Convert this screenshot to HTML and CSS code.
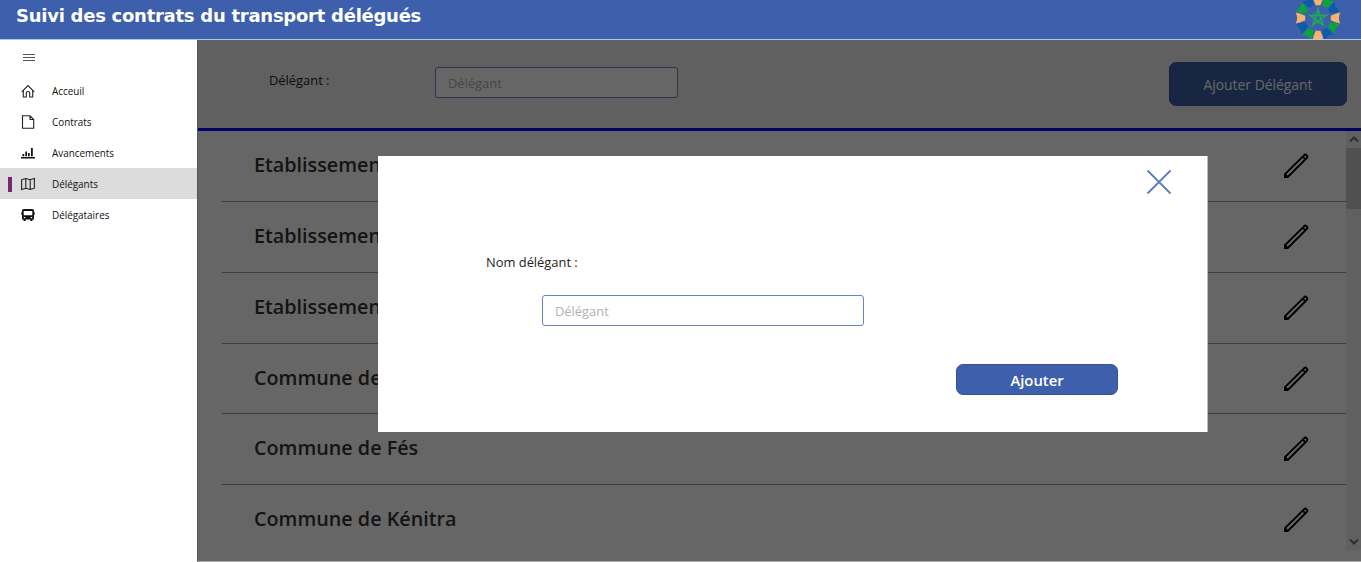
FILE: index.html
```html
<!DOCTYPE html>
<html lang="fr">
<head>
<meta charset="utf-8">
<title>Suivi des contrats du transport délégués</title>
<link rel="stylesheet" href="styles.css">
</head>
<body>
<svg class="defs" aria-hidden="true">
  <symbol id="pencil" viewBox="0 0 26 26"><path d="M2 24V21.200L21 2.300a1.900 1.900 0 0 1 2.700 2.700L4.800 24zM2.200 21.400l2.400 2.400M19.700 3.600l2.700 2.700"/></symbol>
</svg>
<header class="header">
  <h1 class="title">Suivi des contrats du transport délégués</h1>
  <svg class="logo" viewBox="-23 -18 46 39">
    <g fill="#f5b36c"><path id="p" d="M-5.500 -22.300Q0 -19.500 5.500 -22.300L4.300 -17.500L2.300 -12.800H-2.300L-4.300 -17.500Z"/><use href="#p" transform="rotate(90)"/><use href="#p" transform="rotate(180)"/><use href="#p" transform="rotate(270)"/></g>
    <g fill="#0aa53a"><path d="M-5.500 -22.300Q0 -19.500 5.500 -22.300L4.300 -17.500L2.300 -12.800H-2.300L-4.300 -17.500Z" id="g" transform="rotate(30)"/><use href="#g" transform="rotate(180)"/><use href="#g" transform="rotate(90)"/><use href="#g" transform="rotate(270)"/></g>
    <g fill="#0c5cab"><path d="M-5.500 -22.300Q0 -19.500 5.500 -22.300L4.300 -17.500L2.300 -12.800H-2.300L-4.300 -17.500Z" id="b" transform="rotate(60)"/><use href="#b" transform="rotate(180)"/><use href="#b" transform="rotate(90)"/><use href="#b" transform="rotate(270)"/></g>
    <path class="star" d="M0 -8.500L5 7L-8 -2.600H8L-5 7Z"/>
  </svg>
</header>
<div class="body">
  <nav class="sidebar">
    <div class="burger"><i></i><i></i><i></i></div>
    <a class="item"><svg class="icon" viewBox="0 0 14 14"><path d="M.8 7.800L7 1.500l6.200 6.300M2.300 6.500v6.500h3V9q0-1.500 1.700-1.500T8.700 9v4h3V6.500"/></svg>Acceuil</a>
    <a class="item"><svg class="icon" viewBox="0 0 14 14"><path d="M1.500 .8h7.500l3.700 3.700v8.700H1.500zM9 .8v3.700h3.700"/></svg>Contrats</a>
    <a class="item"><svg class="icon solid" viewBox="0 0 14 14"><path d="M0 11h14v1.500H0zM1.500 8h1.700v2.200H1.500zM4.300 5.500H6v4.700H4.300zM7 7h1.700v3.200H7zM10 2h1.800v8.200H10z"/></svg>Avancements</a>
    <a class="item active"><svg class="icon" viewBox="0 0 14 14"><path d="M.6 2.800L4.800 1.500l4.400 1.300 4.200-1.300v9.700l-4.200 1.300-4.400-1.300-4.200 1.300zM4.800 1.500v9.700M9.200 2.800v9.700"/></svg>Délégants</a>
    <a class="item"><svg class="icon solid" viewBox="0 0 14 14"><path fill-rule="evenodd" d="M2.800 1h8.400q1.800 0 1.800 1.800V4h.6v3H13v4.500h-1.500V13H9.300v-1.500H4.700V13H2.500v-1.500H1V7H.4V4H1V2.800Q1 1 2.800 1zM2.700 3v4.200h8.600V3zM2.800 9v1.200h1.500V9zM9.700 9v1.200h1.500V9z"/></svg>Délégataires</a>
  </nav>
  <main class="main">
    <section class="toolbar">
      <label class="filter-label">Délégant :</label>
      <input class="field filter-field" placeholder="Délégant">
      <button class="add">Ajouter Délégant</button>
    </section>
    <section class="content">
      <div class="list">
        <div class="row">Etablissement<svg class="pencil"><use href="#pencil"/></svg></div>
        <div class="row">Etablissement<svg class="pencil"><use href="#pencil"/></svg></div>
        <div class="row">Etablissement<svg class="pencil"><use href="#pencil"/></svg></div>
        <div class="row">Commune de<svg class="pencil"><use href="#pencil"/></svg></div>
        <div class="row">Commune de Fés<svg class="pencil"><use href="#pencil"/></svg></div>
        <div class="row">Commune de Kénitra<svg class="pencil"><use href="#pencil"/></svg></div>
      </div>
      <div class="scrollbar">
        <svg class="arrow" viewBox="0 0 15 17"><path d="M4 10.500l4-4 4 4"/></svg>
        <div class="thumb"></div>
        <svg class="arrow" viewBox="0 0 15 17"><path d="M4 6.500l4 4 4-4"/></svg>
      </div>
    </section>
    <div class="overlay"></div>
    <section class="dialog">
      <svg class="close" viewBox="0 0 26 26"><path d="M1.500 1.500l23 23M24.500 1.500l-23 23"/></svg>
      <label class="dialog-label">Nom délégant :</label>
      <input class="field dialog-field" placeholder="Délégant">
      <button class="submit">Ajouter</button>
    </section>
  </main>
</div>
</body>
</html>
```
FILE: styles.css
```css
* { box-sizing: border-box; }
body { margin: 0; height: 562px; overflow: hidden; background: #fff; font-family: "Open Sans", sans-serif; color: #333; }
.defs { display: none; }
.header { height: 40px; display: flex; justify-content: space-between; background: #3e5fab; border-bottom: 1px solid #b9c6e4; padding: 0 20px 0 16px; overflow: hidden; }
.title { margin: 5px 0 0; font: bold 18px/22px "DejaVu Sans", sans-serif; letter-spacing: -.26px; color: #fff; white-space: nowrap; }
.logo { width: 46px; height: 39px; }
.star { fill: none; stroke: #1ea65a; stroke-width: 1.8; }
.body { display: flex; height: 522px; }
.sidebar { width: 197px; padding-top: 14px; background: #fff; }
.burger { height: 21px; margin-bottom: 0; padding-left: 23px; display: flex; flex-direction: column; gap: 2px; }
.burger i { width: 12px; height: 1px; background: #555; }
.item { height: 31px; display: flex; align-items: center; gap: 17px; padding: 1px 0 0 21px; font-size: 9.900px; line-height: 14px; color: #111; }
.active { background: linear-gradient(#742774, #742774) 8px 9px / 4px 15px no-repeat #dcdcdc; }
.item:first-of-type, .item { margin-top: 0; }
.burger + .item { height: 31px; }
.icon { width: 14px; height: 14px; margin-top: -1px; fill: none; stroke: #222; stroke-width: 1.1; }
.solid { fill: #111; stroke: none; }
.main { position: relative; width: 1164px; height: 522px; border-left: 1px solid #555; border-bottom: 1px solid #aaa; }
.toolbar { height: 91px; display: flex; align-items: flex-start; background: #f1f1f1; border-bottom: 3px solid #00f; padding-left: 71px; }
.filter-label { width: 166px; padding-top: 31px; font-size: 12.900px; line-height: 18px; color: #222; }
.field { display: block; height: 31px; border: 1px solid #6b84bb; border-radius: 3px; padding: 1px 12px 0; font: 12.900px "Open Sans", sans-serif; background: #fff; }
.field::placeholder { color: #b1b1b1; opacity: 1; }
.filter-field { width: 243px; margin-top: 27px; }
.add { width: 178px; height: 44px; margin: 22px 14px 0 auto; padding: 0; border: 1px solid #355391; border-radius: 7px; background: #3e5fab; color: #fff; font: 13.900px "Open Sans", sans-serif; }
.content { height: 430px; display: flex; background: #fff; overflow: hidden; }
.list { width: 1148px; padding-left: 24px; }
.row { height: 70.850px; display: flex; justify-content: space-between; padding: 18px 37px 0 32px; border-bottom: 1px solid #8b95bf; font-size: 19.750px; line-height: 32px; font-weight: 600; color: #333; }
.row:last-child { border-bottom: 0; }
.pencil { width: 26px; height: 26px; margin-top: 4px; fill: none; stroke: #000; stroke-width: 1.900; }
.scrollbar { width: 15px; height: 419px; display: flex; flex-direction: column; background: #f1f1f1; }
.arrow { width: 15px; height: 17px; fill: none; stroke: #707070; stroke-width: 2; }
.thumb { height: 61px; margin-bottom: auto; background: #c8c8c8; }
.overlay { position: absolute; inset: 0; background: rgba(0, 0, 0, .6); }
.dialog { position: absolute; left: 180px; top: 116px; width: 830px; height: 276px; background: #fff; border-right: 1px solid #bbb; display: flex; flex-direction: column; padding: 13px 89px 0 108px; }
.close { width: 26px; height: 26px; align-self: flex-end; margin-right: -54px; fill: none; stroke: #5b7dbd; stroke-width: 1.8; }
.dialog-label { margin-top: 58px; font-size: 12.900px; line-height: 18px; color: #222; }
.dialog-field { width: 322px; margin: 24px 0 0 56px; flex: none; }
.submit { width: 162px; height: 31px; flex: none; align-self: flex-end; margin-top: 38px; padding: 1px 0 0; border: 1px solid #355391; border-radius: 7px; background: #3e5fab; color: #fff; font: 600 14.800px "Open Sans", sans-serif; }
```
